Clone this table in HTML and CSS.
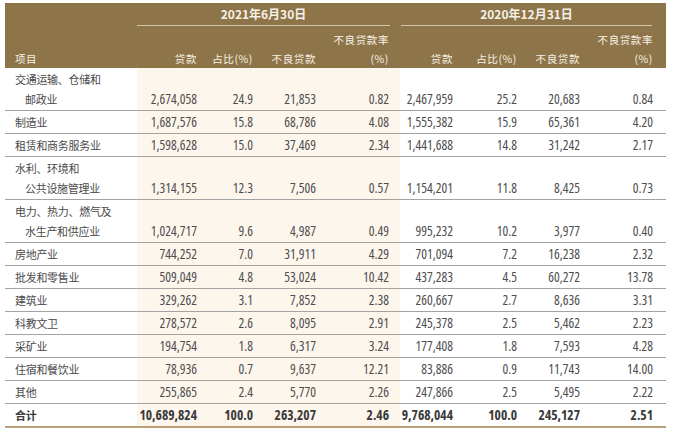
FILE: index.html
```html
<!DOCTYPE html>
<html lang="zh">
<head>
<meta charset="utf-8">
<link rel="stylesheet" href="styles.css">
</head>
<body>
<table class="loans">
  <colgroup>
    <col class="c0"><col class="c1"><col class="c2"><col class="c3"><col class="c4">
    <col class="c5"><col class="c6"><col class="c7"><col class="c8">
  </colgroup>
  <thead>
    <tr class="h-date">
      <th></th>
      <th colspan="4"><div class="date d1">2021年6月30日</div></th>
      <th colspan="4"><div class="date d2">2020年12月31日</div></th>
    </tr>
    <tr class="h-cols">
      <th class="lbl">项目</th>
      <th class="n p1">贷款</th>
      <th class="n p2">占比(%)</th>
      <th class="n p3">不良贷款</th>
      <th class="n p4">不良贷款率<br>(%)</th>
      <th class="n p5">贷款</th>
      <th class="n p6">占比(%)</th>
      <th class="n p7">不良贷款</th>
      <th class="n p8">不良贷款率<br>(%)</th>
    </tr>
  </thead>
  <tbody>
    <tr><td class="lbl">交通运输、仓储和<br><span class="ind">邮政业</span></td><td class="n p1 band">2,674,058</td><td class="n p2 band">24.9</td><td class="n p3 band">21,853</td><td class="n p4 band">0.82</td><td class="n p5">2,467,959</td><td class="n p6">25.2</td><td class="n p7">20,683</td><td class="n p8">0.84</td></tr>
    <tr><td class="lbl">制造业</td><td class="n p1 band">1,687,576</td><td class="n p2 band">15.8</td><td class="n p3 band">68,786</td><td class="n p4 band">4.08</td><td class="n p5">1,555,382</td><td class="n p6">15.9</td><td class="n p7">65,361</td><td class="n p8">4.20</td></tr>
    <tr><td class="lbl">租赁和商务服务业</td><td class="n p1 band">1,598,628</td><td class="n p2 band">15.0</td><td class="n p3 band">37,469</td><td class="n p4 band">2.34</td><td class="n p5">1,441,688</td><td class="n p6">14.8</td><td class="n p7">31,242</td><td class="n p8">2.17</td></tr>
    <tr><td class="lbl">水利、环境和<br><span class="ind">公共设施管理业</span></td><td class="n p1 band">1,314,155</td><td class="n p2 band">12.3</td><td class="n p3 band">7,506</td><td class="n p4 band">0.57</td><td class="n p5">1,154,201</td><td class="n p6">11.8</td><td class="n p7">8,425</td><td class="n p8">0.73</td></tr>
    <tr><td class="lbl">电力、热力、燃气及<br><span class="ind">水生产和供应业</span></td><td class="n p1 band">1,024,717</td><td class="n p2 band">9.6</td><td class="n p3 band">4,987</td><td class="n p4 band">0.49</td><td class="n p5">995,232</td><td class="n p6">10.2</td><td class="n p7">3,977</td><td class="n p8">0.40</td></tr>
    <tr><td class="lbl">房地产业</td><td class="n p1 band">744,252</td><td class="n p2 band">7.0</td><td class="n p3 band">31,911</td><td class="n p4 band">4.29</td><td class="n p5">701,094</td><td class="n p6">7.2</td><td class="n p7">16,238</td><td class="n p8">2.32</td></tr>
    <tr><td class="lbl">批发和零售业</td><td class="n p1 band">509,049</td><td class="n p2 band">4.8</td><td class="n p3 band">53,024</td><td class="n p4 band">10.42</td><td class="n p5">437,283</td><td class="n p6">4.5</td><td class="n p7">60,272</td><td class="n p8">13.78</td></tr>
    <tr><td class="lbl">建筑业</td><td class="n p1 band">329,262</td><td class="n p2 band">3.1</td><td class="n p3 band">7,852</td><td class="n p4 band">2.38</td><td class="n p5">260,667</td><td class="n p6">2.7</td><td class="n p7">8,636</td><td class="n p8">3.31</td></tr>
    <tr><td class="lbl">科教文卫</td><td class="n p1 band">278,572</td><td class="n p2 band">2.6</td><td class="n p3 band">8,095</td><td class="n p4 band">2.91</td><td class="n p5">245,378</td><td class="n p6">2.5</td><td class="n p7">5,462</td><td class="n p8">2.23</td></tr>
    <tr><td class="lbl">采矿业</td><td class="n p1 band">194,754</td><td class="n p2 band">1.8</td><td class="n p3 band">6,317</td><td class="n p4 band">3.24</td><td class="n p5">177,408</td><td class="n p6">1.8</td><td class="n p7">7,593</td><td class="n p8">4.28</td></tr>
    <tr><td class="lbl">住宿和餐饮业</td><td class="n p1 band">78,936</td><td class="n p2 band">0.7</td><td class="n p3 band">9,637</td><td class="n p4 band">12.21</td><td class="n p5">83,886</td><td class="n p6">0.9</td><td class="n p7">11,743</td><td class="n p8">14.00</td></tr>
    <tr><td class="lbl">其他</td><td class="n p1 band">255,865</td><td class="n p2 band">2.4</td><td class="n p3 band">5,770</td><td class="n p4 band">2.26</td><td class="n p5">247,866</td><td class="n p6">2.5</td><td class="n p7">5,495</td><td class="n p8">2.22</td></tr>
    <tr class="total"><td class="lbl">合计</td><td class="n p1 band">10,689,824</td><td class="n p2 band">100.0</td><td class="n p3 band">263,207</td><td class="n p4 band">2.46</td><td class="n p5">9,768,044</td><td class="n p6">100.0</td><td class="n p7">245,127</td><td class="n p8">2.51</td></tr>
  </tbody>
</table>
</body>
</html>
```
FILE: styles.css
```css
html, body {
  margin: 0;
  padding: 0;
  background: #ffffff;
}
body {
  padding: 3px 0 0 5px;
  font-family: "Noto Sans CJK SC", "Noto Sans", sans-serif;
  color: #4a4a4a;
}
.loans {
  border-collapse: collapse;
  table-layout: fixed;
  width: 661px;
}
.c0 { width: 132px; }
.c1 { width: 63px; }
.c2 { width: 56px; }
.c3 { width: 63px; }
.c4 { width: 81px; }
.c5 { width: 56px; }
.c6 { width: 64px; }
.c7 { width: 63px; }
.c8 { width: 83px; }

thead th {
  background: #8e7549;
  color: #f6f1e7;
  font-weight: 400;
  padding: 0;
}
.h-date th {
  height: 22px;
  vertical-align: top;
}
.date {
  font-size: 12px;
  font-weight: 700;
  line-height: 22px;
  height: 22px;
  text-align: center;
  border-bottom: 1px solid #d3c5a8;
}
.d1 { margin-right: 10px; }
.d2 { margin-left: 1px; margin-right: 14px; }

.h-cols th {
  font-size: 10.5px;
  letter-spacing: 0.6px;
  line-height: 19px;
  height: 42px;
  vertical-align: bottom;
}
.h-cols th.lbl {
  text-align: left;
  padding-left: 10px;
}

tbody td {
  font-size: 13px;
  line-height: 20px;
  padding-top: 1px;
  padding-bottom: 1px;
  border-bottom: 1px solid #a3a3a3;
  vertical-align: bottom;
  white-space: nowrap;
}
tbody td.n {
  font-family: "Open Sans", "Noto Sans", sans-serif;
  font-size: 13.5px;
  font-stretch: 78%;
  font-weight: 380;
  color: #4d4d4d;
}
tbody td.lbl {
  font-size: 11px;
  letter-spacing: -0.3px;
  padding-left: 10px;
  text-align: left;
}
.ind { padding-left: 10px; }

.n { text-align: right; }
.p1, .p2, .p3, .p5, .p6, .p7 { padding-right: 3px; }
.p4 { padding-right: 11px; }
.p8 { padding-right: 13px; }

.band { background: #fdf6ed; }

.total td,
tbody .total td.n {
  font-weight: 700;
  border-bottom: 2px solid #b8a078;
  color: #3a3a3a;
}
```
